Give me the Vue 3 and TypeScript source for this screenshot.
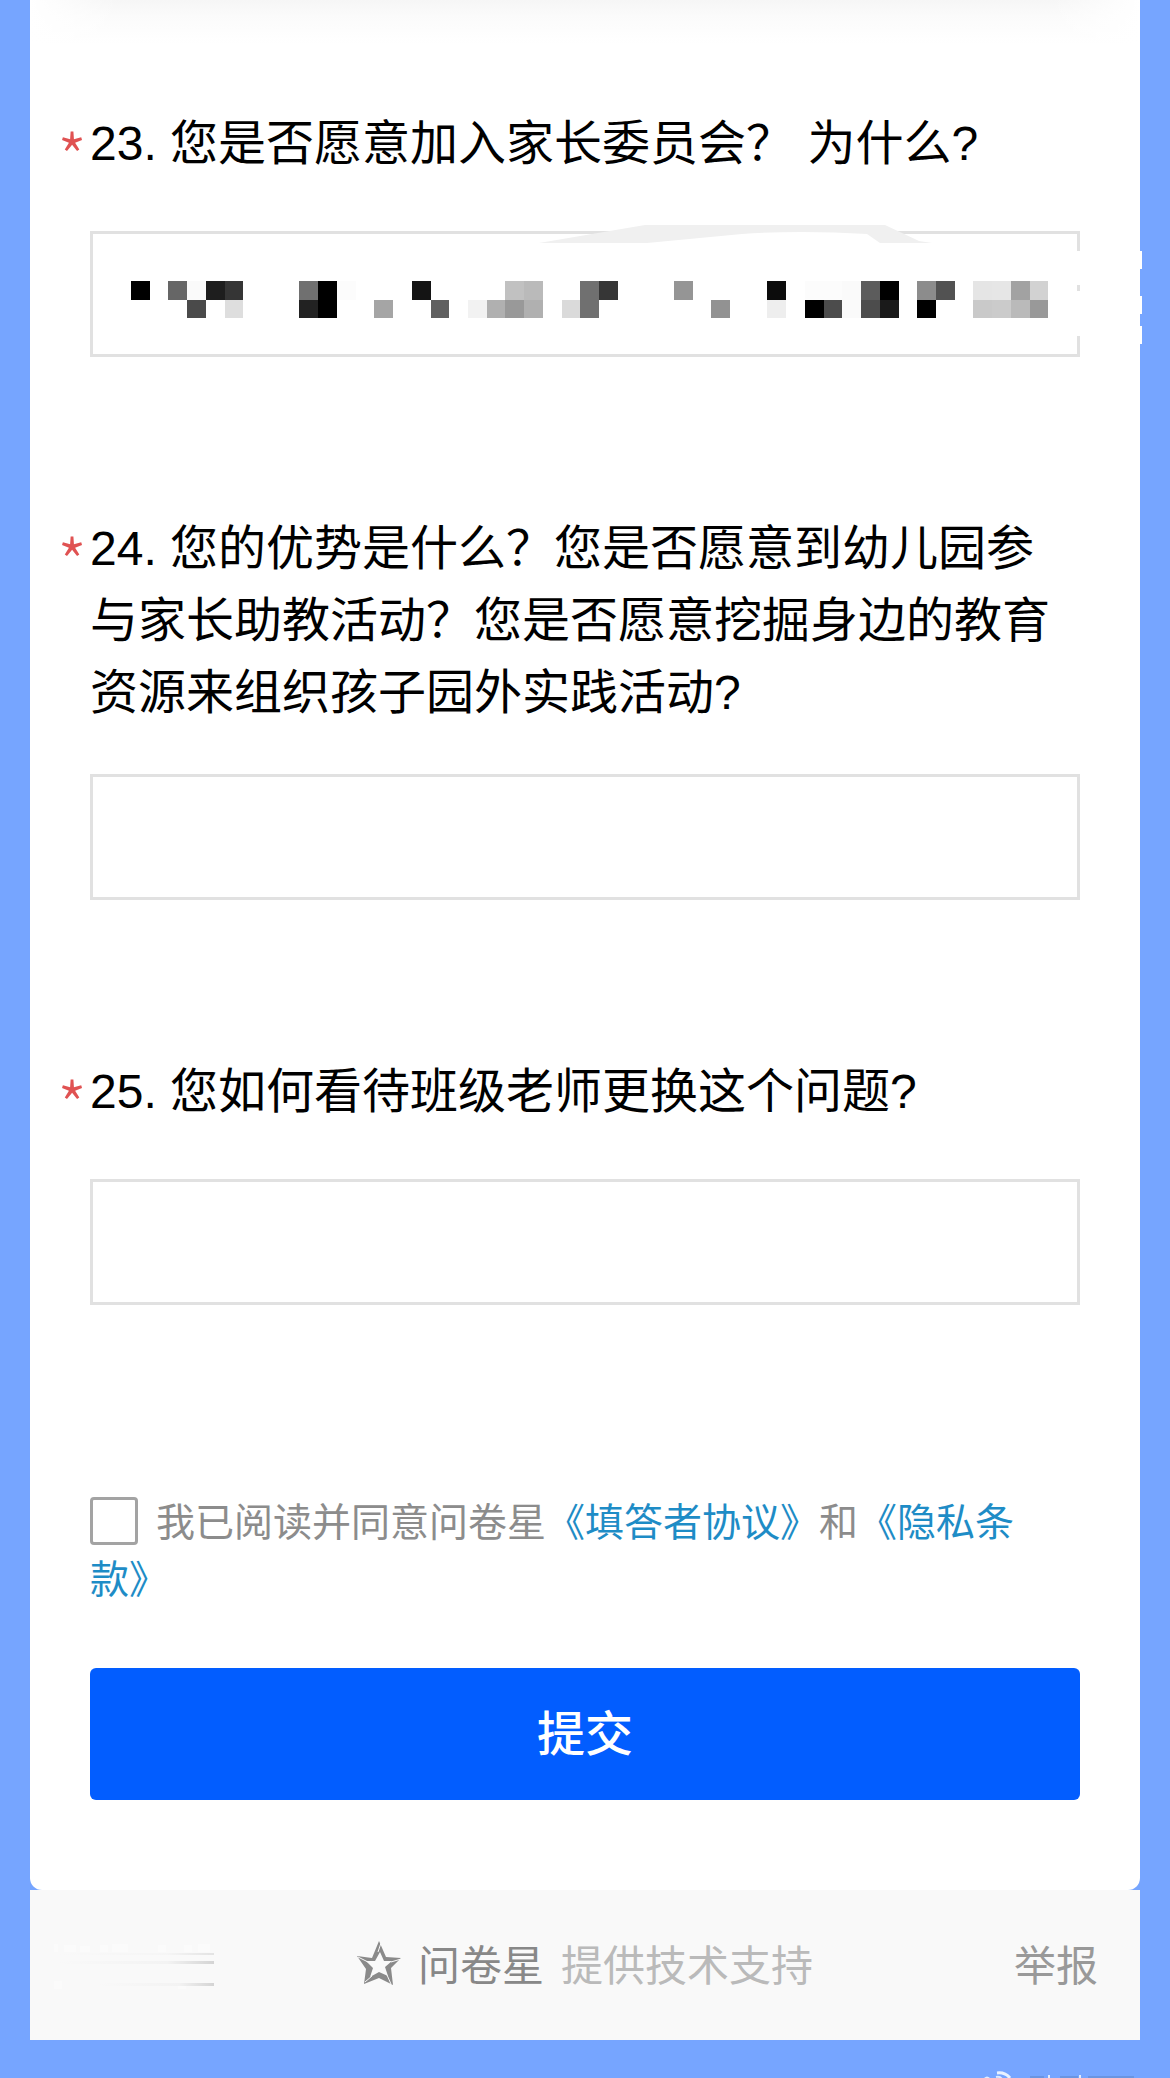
<script setup lang="ts">
import { ref } from 'vue'

interface Question {
  id: number
  title: string
  masked: boolean
}

const questions: Question[] = [
  { id: 23, title: '您是否愿意加入家长委员会？ 为什么?', masked: true },
  {
    id: 24,
    title:
      '您的优势是什么？您是否愿意到幼儿园参与家长助教活动？您是否愿意挖掘身边的教育资源来组织孩子园外实践活动?',
    masked: false,
  },
  { id: 25, title: '您如何看待班级老师更换这个问题?', masked: false },
]

const answers = ref<Record<number, string>>({ 23: '', 24: '', 25: '' })
const agreed = ref(false)

// Mosaic cells over the private answer: [column, row, shade]
const mosaic: [number, number, string][] = [
  [0, 0, '#000'], [2, 0, '#666'], [3, 0, '#fafafa'], [4, 0, '#1e1e1e'], [5, 0, '#353535'],
  [3, 1, '#4a4a4a'], [5, 1, '#dedede'],
  [9, 0, '#707070'], [10, 0, '#000'], [9, 1, '#222'], [10, 1, '#000'], [11, 0, '#fcfcfc'],
  [13, 1, '#a5a5a5'], [15, 0, '#141414'], [16, 1, '#606060'],
  [18, 1, '#f2f2f2'], [19, 1, '#b0b0b0'], [20, 0, '#c1c1c1'], [21, 0, '#bababa'],
  [20, 1, '#999'], [21, 1, '#b0b0b0'],
  [23, 1, '#dadada'], [24, 0, '#707070'], [25, 0, '#363636'], [24, 1, '#707070'],
  [29, 0, '#959595'], [31, 1, '#929292'],
  [34, 0, '#0c0c0c'], [34, 1, '#eee'], [36, 0, '#fcfcfc'], [37, 0, '#fcfcfc'],
  [36, 1, '#000'], [37, 1, '#4c4c4c'], [38, 0, '#fafafa'], [38, 1, '#fafafa'],
  [39, 0, '#5c5c5c'], [40, 0, '#000'], [39, 1, '#4c4c4c'], [40, 1, '#1a1a1a'],
  [42, 0, '#8c8c8c'], [43, 0, '#525252'], [42, 1, '#000'],
  [45, 0, '#e5e5e5'], [46, 0, '#e6e6e6'], [47, 0, '#a2a2a2'], [48, 0, '#d2d2d2'],
  [45, 1, '#c9c9c9'], [46, 1, '#cbcbcb'], [47, 1, '#bababa'], [48, 1, '#999'],
]

const columnX = (column: number): number => Math.round(41 + column * 18.72)
</script>

<template>
  <div class="page">
    <form class="sheet" @submit.prevent>
      <div class="header-shadow"></div>
      <section v-for="q in questions" :key="q.id" class="question">
        <label class="title" :for="`q${q.id}`"><span class="required">*</span>{{ q.id }}. {{ q.title }}</label>
        <div class="field">
          <input :id="`q${q.id}`" v-model="answers[q.id]" class="answer" type="text" autocomplete="off" />
          <template v-if="q.masked">
            <svg class="mask" width="990" height="140" viewBox="0 -14 990 140" aria-hidden="true">
              <path d="M449 12 L555 -6 L795 -6 L829 10 L842 12 L790 12 L777 3 L652 3 L557 12 Z" fill="#f0f0f0" />
              <path d="M652 3 Q710 -1 777 3 Z" fill="#fff" />
              <rect
                v-for="[column, row, shade] in mosaic"
                :key="`${column}-${row}`"
                :x="columnX(column)"
                :y="row ? 69 : 50"
                :width="columnX(column + 1) - columnX(column)"
                :height="row ? 18 : 19"
                :fill="shade"
                shape-rendering="crispEdges"
              />
            </svg>
            <svg class="erased" width="65" height="126" viewBox="0 0 65 126" aria-hidden="true">
              <path
                d="M0 20h3v34H0z M0 60h3v45H0z M62 20h3v18h-3z M62 65h3v18h-3z M62 95h3v18h-3z"
                fill="#fff"
              />
            </svg>
          </template>
        </div>
      </section>

      <p class="agreement"><input id="agree" v-model="agreed" class="tick" type="checkbox" /><label for="agree">我已阅读并同意问卷星</label><a href="#agreement">《填答者协议》</a>和<a href="#privacy">《隐私条<wbr />款》</a></p>
      <button class="submit" type="submit">提交</button>
    </form>

    <footer class="footer">
      <svg class="smear" width="160" height="48" viewBox="0 0 160 48" aria-hidden="true">
        <defs>
          <linearGradient id="fade" x1="0" x2="1" y1="0" y2="0">
            <stop offset="0" stop-color="#f9f9f9" />
            <stop offset="0.7" stop-color="#f3f3f3" />
            <stop offset="1" stop-color="#d4d4d4" />
          </linearGradient>
        </defs>
        <path
          d="M0 1h4v8H0z M10 2h12v7H10z M26 3h10v6H26z M46 2h8v7H46z M58 1h16v8H58z M104 2h8v7h-8z M130 2h8v7h-8z M144 1h12v8h-12z M0 38h8v8H0z M124 40h8v6h-8z"
          fill="#fff"
          opacity="0.4"
        />
        <rect x="4" y="10" width="156" height="2" fill="url(#fade)" opacity="0.6" />
        <rect x="4" y="18" width="156" height="3" fill="url(#fade)" />
        <rect x="44" y="40" width="116" height="3" fill="url(#fade)" />
      </svg>
      <div class="brand">
        <svg class="star" width="44" height="44" viewBox="0 0 44 44" aria-hidden="true">
          <path
            fill="#8a8a8a"
            fill-rule="evenodd"
            d="M22 0 L29 16 L44 17 L34 27 L36 44 L22 37 L7 43 L9 28 L0 15 L15 17 Z M23 11 L18 20 L9 20 L16 27 L13 36 L22 31 L31 35 L28 26 L35 20 L27 20 Z"
          />
          <path d="M24 2 L21 11 M1 16 L11 21 M44 18 L34 21 M34 43 L30 34 M8 41 L15 35" stroke="#f9f9f9" stroke-width="1" />
        </svg>
        <a class="name" href="#wjx">问卷星</a>
        <span class="support">提供技术支持</span>
      </div>
      <a class="report" href="#report">举报</a>
    </footer>

    <svg class="watermark" width="160" height="8" viewBox="0 0 160 8" aria-hidden="true">
      <path d="M17 3 Q25 2 30 8" fill="none" stroke="#e8f2ff" stroke-width="3" />
      <path d="M16 7 q4 -1 6 2" fill="none" stroke="#dceaff" stroke-width="2" />
      <path d="M4 8 q3 -3 6 0z" fill="#e0edff" />
      <path d="M50 7h14 M80 7h18 M108 7h46" stroke="#668fd6" stroke-width="2" opacity="0.7" />
      <path d="M69 5v3 M100 5v3" stroke="#e0edff" stroke-width="2" />
    </svg>
  </div>
</template>

<style>
body {
  margin: 0;
  background: #76a5ff;
}
</style>

<style scoped>
.page {
  position: relative;
  box-sizing: border-box;
  min-height: 100vh;
  padding: 0 30px 38px;
  background: #76a5ff;
  color: #000;
  font-family: 'Liberation Sans', 'Noto Sans CJK SC', sans-serif;
}

.sheet {
  padding: 0 60px 90px;
  border-radius: 0 0 12px 12px;
  background: #fff;
}

.header-shadow {
  height: 108px;
  margin: 0 -60px;
  background:
    linear-gradient(to right, #fff, transparent 8%, transparent 92%, #fff),
    linear-gradient(#f6f6f6, #fbfbfb 16px, #fff 44px);
}

.question {
  margin-bottom: 156px;
}

.question:last-of-type {
  margin-bottom: 189px;
}

.title {
  position: relative;
  display: block;
  min-height: 78px;
  margin-bottom: 45px;
  font-size: 48px;
  line-height: 72px;
}

.required {
  position: absolute;
  top: 12px;
  left: -33px;
  color: #e05252;
  font-family: 'Noto Sans CJK SC', sans-serif;
  font-size: 68px;
  font-weight: 300;
}

.field {
  position: relative;
}

.answer {
  display: block;
  box-sizing: border-box;
  width: 100%;
  height: 126px;
  padding: 0 30px;
  border: 3px solid #e1e1e1;
  border-radius: 0;
  outline: none;
  background: #fff;
  font: inherit;
  font-size: 48px;
}

.mask {
  position: absolute;
  top: -14px;
  left: 0;
  pointer-events: none;
}

.erased {
  position: absolute;
  top: 0;
  right: -62px;
  pointer-events: none;
}

.agreement {
  margin: 0 0 60px;
  color: #8c8c8c;
  font-size: 39px;
  line-height: 57px;
  text-spacing-trim: space-all;
}

.agreement a {
  color: #1e8cc6;
  text-decoration: none;
}

.tick {
  box-sizing: border-box;
  width: 48px;
  height: 48px;
  margin: -5px 18px 5px 0;
  border: 3px solid #a3a3a3;
  border-radius: 4px;
  background: #fff;
  appearance: none;
  vertical-align: middle;
}

.tick:checked {
  background: #025dff;
}

.submit {
  display: block;
  width: 100%;
  height: 132px;
  padding: 0 0 9px;
  border: 0;
  border-radius: 6px;
  background: #025dff;
  color: #fff;
  font-family: inherit;
  font-size: 48px;
  font-weight: 500;
}

.footer {
  display: grid;
  grid-template-columns: 1fr auto 1fr;
  align-items: center;
  box-sizing: border-box;
  height: 150px;
  padding: 4px 24px 0;
  background: #f9f9f9;
  font-size: 42px;
  line-height: 60px;
}

.footer a {
  text-decoration: none;
}

.brand {
  display: flex;
  align-items: center;
  gap: 17px;
}

.star {
  flex: none;
  margin-bottom: 8px;
}

.footer .name {
  color: #888;
}

.support {
  color: #bababa;
}

.footer .report {
  justify-self: end;
  margin-right: 18px;
  color: #999;
}

.watermark {
  position: absolute;
  right: 30px;
  bottom: 0;
}
</style>
